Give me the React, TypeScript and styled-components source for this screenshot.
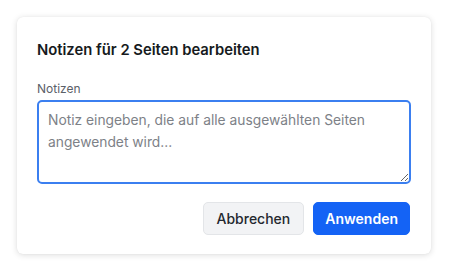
import styled, { createGlobalStyle } from "styled-components";

const GlobalStyle = createGlobalStyle`
    html, body {
        margin: 0;
        padding: 0;
        background: #ffffff;
        font-family: Inter, "Liberation Sans", sans-serif;
    }
`

const Page = styled.div`
    padding: 17px;
`

const Card = styled.div`
    width: 414px;
    box-sizing: border-box;
    padding: 23px 20px 19px;
    background: #ffffff;
    border-radius: 6px;
    box-shadow: 0 1px 6px rgba(0, 0, 0, 0.14), 0 0 1px rgba(0, 0, 0, 0.08);
`

const Title = styled.h2`
    margin: 0;
    font-size: 14.8px;
    line-height: 20px;
    font-weight: 600;
    color: #161a20;
`

const Label = styled.label`
    display: block;
    margin: 21px 0 3px;
    font-size: 12px;
    line-height: 16px;
    color: #5b6068;
`

const TextArea = styled.textarea`
    display: block;
    width: 100%;
    height: 84px;
    box-sizing: border-box;
    padding: 7px 9px;
    border: 2px solid #3b7ff0;
    border-radius: 5px;
    outline: none;
    resize: vertical;
    font-family: inherit;
    font-size: 13.8px;
    line-height: 22px;
    color: #1f2328;

    &::placeholder {
        color: #7d8187;
    }
`

const Actions = styled.div`
    display: flex;
    justify-content: flex-end;
    gap: 9px;
    margin-top: 18px;
    padding-right: 1px;
`

const Button = styled.button<{ $primary?: boolean }>`
    height: 33px;
    padding: 0 ${(p) => (p.$primary ? "11px" : "13px")};
    border-radius: 5px;
    font-family: inherit;
    font-size: 14px;
    font-weight: ${(p) => (p.$primary ? 600 : 500)};
    color: ${(p) => (p.$primary ? "#ffffff" : "#24282e")};
    background: ${(p) => (p.$primary ? "#1463f5" : "#f2f3f5")};
    border: 1px solid ${(p) => (p.$primary ? "#1463f5" : "#e3e5e8")};
    cursor: pointer;
`

export default function App() {
    return (
        <Page>
            <GlobalStyle />
            <Card>
                <Title>Notizen für 2 Seiten bearbeiten</Title>
                <Label htmlFor="notes">Notizen</Label>
                <TextArea
                    id="notes"
                    placeholder="Notiz eingeben, die auf alle ausgewählten Seiten angewendet wird..."
                />
                <Actions>
                    <Button>Abbrechen</Button>
                    <Button $primary>Anwenden</Button>
                </Actions>
            </Card>
        </Page>
    );
}
